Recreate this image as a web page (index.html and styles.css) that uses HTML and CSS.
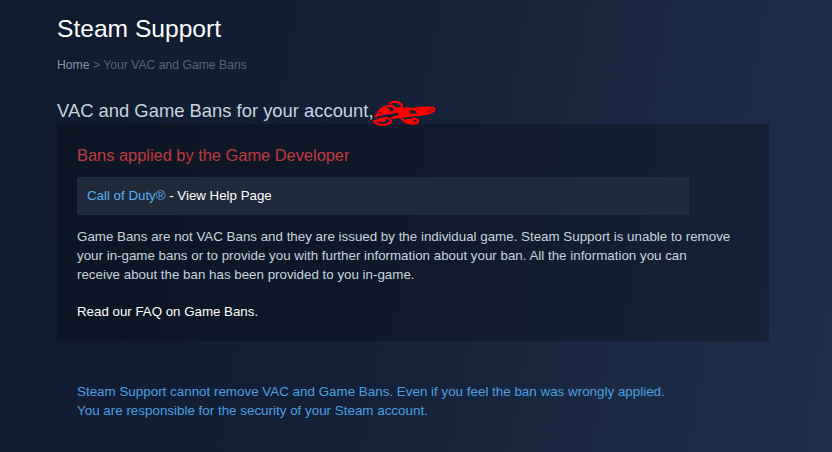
FILE: index.html
```html
<!DOCTYPE html>
<html>
<head>
<meta charset="utf-8">
<link rel="stylesheet" href="styles.css">
</head>
<body>
<div class="page">
  <h1 class="title">Steam Support</h1>
  <div class="crumbs"><span class="crumb-home">Home</span> &gt; Your VAC and Game Bans</div>
  <h2 class="account">VAC and Game Bans for your account,<span class="redact"><svg width="66" height="28" viewBox="0 0 66 28"><g fill="none" stroke="#ff0000" stroke-width="2.2" stroke-linecap="round" stroke-linejoin="round"><path d="M4 18 C6 12 10 8 16 7 C20 6 24 8 22 12 C20 15 12 15 10 12"/><path d="M18 4 C22 2 28 3 30 6 C31 9 26 10 22 9"/><path d="M6 16 L40 10 C48 9 56 8 62 9 C64 11 60 14 54 15 L20 19"/><path d="M2 22 C4 26 12 27 18 24 C20 22 18 19 14 19 C10 19 6 21 4 22"/><path d="M22 18 C30 16 40 15 48 16"/><path d="M30 20 C34 25 42 26 46 23 C47 21 44 19 40 20"/><path d="M24 12 C30 9 38 9 44 11"/><path d="M46 12 C52 10 58 11 60 12"/></g><g fill="#ff0000"><rect x="8" y="9" width="10" height="5" rx="2"/><rect x="26" y="11" width="12" height="5" rx="2"/><rect x="44" y="11" width="12" height="4" rx="2"/><rect x="6" y="19" width="8" height="4" rx="2"/><rect x="34" y="20" width="8" height="4" rx="2"/></g></svg></span></h2>
  <section class="panel">
    <h3 class="panel-head">Bans applied by the Game Developer</h3>
    <div class="help-row"><span class="game">Call of Duty®</span> - View Help Page</div>
    <p class="desc">Game Bans are not VAC Bans and they are issued by the individual game. Steam Support is unable to remove your in-game bans or to provide you with further information about your ban. All the information you can receive about the ban has been provided to you in-game.</p>
    <p class="faq">Read our FAQ on Game Bans.</p>
  </section>
  <div class="notice">
    <p>Steam Support cannot remove VAC and Game Bans. Even if you feel the ban was wrongly applied.</p>
    <p>You are responsible for the security of your Steam account.</p>
  </div>
</div>
</body>
</html>
```
FILE: styles.css
```css
html, body {
  margin: 0;
  padding: 0;
  height: 100%;
}
body {
  background: linear-gradient(100deg, #0f1a2d 0%, #132036 45%, #1c2b44 80%, #1f2f49 100%);
  font-family: "Liberation Sans", Arial, sans-serif;
  color: #c6d4df;
  overflow: hidden;
}
.page {
  padding: 14px 0 0 57px;
  width: 712px;
}
.title {
  margin: 0;
  font-size: 24.6px;
  font-weight: normal;
  color: #ffffff;
  line-height: 30px;
}
.crumbs {
  margin-top: 13px;
  font-size: 12.2px;
  line-height: 16px;
  color: #56667a;
}
.crumb-home {
  color: #8795a6;
}
.account {
  margin: 27px 0 0 0;
  font-size: 18.4px;
  font-weight: normal;
  line-height: 22px;
  color: #c6d4df;
  display: flex;
  align-items: center;
  height: 22px;
}
.redact {
  display: inline-block;
  width: 66px;
  height: 28px;
  margin-left: -2px;
  margin-top: 4px;
}
.redact svg {
  display: block;
}
.panel {
  margin-top: 2px;
  background: rgba(8, 12, 20, 0.35);
  padding: 21px 20px 20px 20px;
}
.panel-head {
  margin: 0;
  font-size: 16.4px;
  font-weight: normal;
  color: #c0393d;
  line-height: 20px;
}
.help-row {
  margin-top: 12px;
  width: 592px;
  background: #1f2a3b;
  padding: 10px;
  height: 18px;
  line-height: 18px;
  font-size: 13.3px;
  color: #ffffff;
}
.game {
  color: #5ab0ef;
}
.desc {
  margin: 12px 0 0 0;
  max-width: 654px;
  font-size: 13.35px;
  line-height: 19px;
  color: #c6d4df;
}
.faq {
  margin: 18px 0 0 0;
  font-size: 13.3px;
  line-height: 19px;
  color: #ffffff;
}
.notice {
  margin-top: 41px;
  padding-left: 20px;
  font-size: 13.4px;
  line-height: 19px;
  color: #4aa0e2;
}
.notice p {
  margin: 0;
}
```
